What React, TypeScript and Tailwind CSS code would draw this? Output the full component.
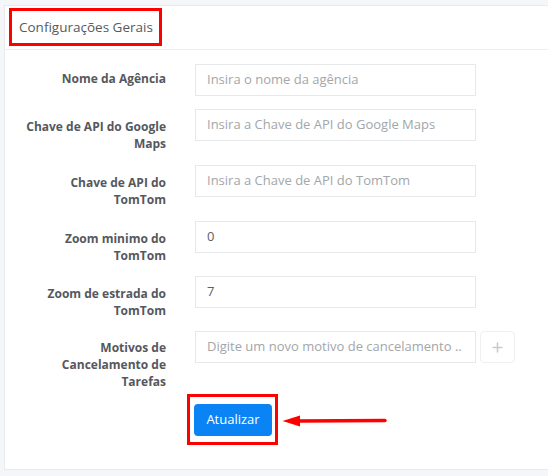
import { Plus } from 'lucide-react';

const rows = [
  { label: ['Nome da Agência'], placeholder: 'Insira o nome da agência', value: '', pt: 'pt-[7px]', mb: 'mb-[13px]' },
  { label: ['Chave de API do Google', 'Maps'], placeholder: 'Insira a Chave de API do Google Maps', value: '', pt: 'pt-[10px]', mb: 'mb-[13px]' },
  { label: ['Chave de API do', 'TomTom'], placeholder: 'Insira a Chave de API do TomTom', value: '', pt: 'pt-[10px]', mb: 'mb-[13px]' },
  { label: ['Zoom minimo do', 'TomTom'], placeholder: '', value: '0', pt: 'pt-[10px]', mb: 'mb-[12px]' },
  { label: ['Zoom de estrada do', 'TomTom'], placeholder: '', value: '7', pt: 'pt-[10px]', mb: 'mb-[12px]' },
];

function Field({ placeholder, value }: { placeholder: string; value: string }) {
  return (
    <div className="ml-[29px] flex h-[32px] w-[281px] shrink-0 items-center border border-[#e6e8eb] bg-white pl-[11px] text-[13px]">
      {value ? (
        <span className="text-[#5c6066]">{value}</span>
      ) : (
        <span className="whitespace-nowrap text-[#a3a6aa]">{placeholder}</span>
      )}
    </div>
  );
}

export default function App() {
  return (
    <div className="relative h-[476px] w-[548px] overflow-hidden bg-[#f5f6fa] pl-[4px] pt-[5px] font-['Open_Sans',sans-serif]">
      <div className="h-[465px] w-[560px] border border-[#e8eaee] bg-white">
        {/* Header */}
        <div className="flex h-[44px] items-center border-b border-[#eceef1] pl-[14px] text-[13.5px] text-[#555a60]">
          Configurações Gerais
        </div>

        {/* Form */}
        <div className="pt-[14px]">
          {rows.map((r, i) => (
            <div key={i} className={`flex items-start ${r.mb}`}>
              <div className={`w-[161px] shrink-0 text-right text-[12px] font-bold leading-[16.5px] text-[#55585d] ${r.pt}`}>
                {r.label.map((l) => (
                  <div key={l}>{l}</div>
                ))}
              </div>
              <Field placeholder={r.placeholder} value={r.value} />
            </div>
          ))}

          <div className="mb-[14px] flex items-start">
            <div className="w-[161px] shrink-0 pt-[8px] text-right text-[12px] font-bold leading-[17px] text-[#55585d]">
              <div>Motivos de</div>
              <div>Cancelamento de</div>
              <div>Tarefas</div>
            </div>
            <Field placeholder="Digite um novo motivo de cancelamento .." value="" />
            <div className="ml-[4px] flex h-[32px] w-[35px] items-center justify-center rounded-[4px] border border-[#eeeff1] bg-white">
              <Plus size={15} strokeWidth={2.5} className="text-[#c8cacd]" />
            </div>
          </div>

          <div className="pl-[189px]">
            <button className="h-[32px] w-[78px] rounded-[4px] bg-[#0a84f5] text-[13px] text-white">Atualizar</button>
          </div>
        </div>
      </div>

      {/* Annotations */}
      <div className="absolute left-[9px] top-[8px] h-[38px] w-[153px] border-[3px] border-[#ff0000]" />
      <div className="absolute left-[187px] top-[394px] h-[51px] w-[91px] border-[3px] border-[#ff0000]" />
      <svg className="absolute left-[282px] top-[415px]" width="106" height="12" viewBox="0 0 106 12">
        <line x1="15" y1="6" x2="103" y2="5.5" stroke="#ff0000" strokeWidth="3.5" strokeLinecap="round" />
        <polygon points="0.5,6 18,0.5 18,11.5" fill="#ff0000" />
      </svg>
    </div>
  );
}
